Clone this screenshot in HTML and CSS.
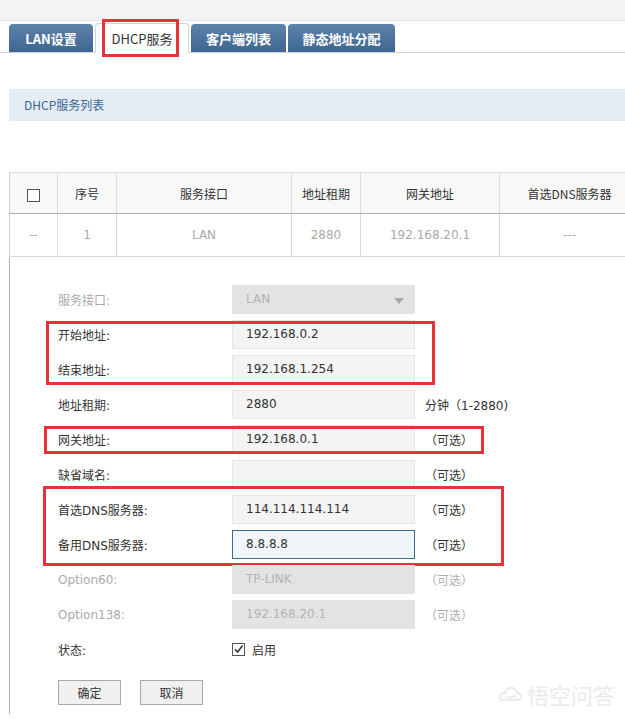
FILE: index.html
```html
<!DOCTYPE html>
<html lang="zh-CN">
<head>
<meta charset="utf-8">
<title>DHCP服务</title>
<link rel="stylesheet" href="styles.css">
</head>
<body>
<div class="page">
  <div class="topstrip"></div>
  <div class="tabs">
    <div class="tab t1">LAN设置</div>
    <div class="tab t2 active"><span>DHCP服务</span><i class="mark"></i></div>
    <div class="tab t3">客户端列表</div>
    <div class="tab t4">静态地址分配</div>
  </div>

  <div class="section-title">DHCP服务列表</div>

  <table class="list">
    <colgroup>
      <col class="c1"><col class="c2"><col class="c3"><col class="c4"><col class="c5"><col class="c6">
    </colgroup>
    <thead>
      <tr>
        <th><span class="cb"></span></th>
        <th>序号</th>
        <th>服务接口</th>
        <th>地址租期</th>
        <th>网关地址</th>
        <th>首选DNS服务器</th>
      </tr>
    </thead>
    <tbody>
      <tr>
        <td>--</td>
        <td>1</td>
        <td>LAN</td>
        <td>2880</td>
        <td>192.168.20.1</td>
        <td>---</td>
      </tr>
    </tbody>
  </table>

  <div class="panel">
    <div class="row disabled">
      <label>服务接口:</label>
      <div class="field select">LAN<span class="arrow"></span></div>
    </div>
    <div class="hl hl-a">
      <div class="row">
        <label>开始地址:</label>
        <div class="field">192.168.0.2</div>
      </div>
      <div class="row">
        <label>结束地址:</label>
        <div class="field">192.168.1.254</div>
      </div>
    </div>
    <div class="row">
      <label>地址租期:</label>
      <div class="field">2880</div>
      <span class="hint hint-unit">分钟（1-2880)</span>
    </div>
    <div class="hl hl-b">
      <div class="row">
        <label>网关地址:</label>
        <div class="field">192.168.0.1</div>
        <span class="hint">（可选）</span>
      </div>
    </div>
    <div class="row">
      <label>缺省域名:</label>
      <div class="field"></div>
      <span class="hint">（可选）</span>
    </div>
    <div class="hl hl-c">
      <div class="row">
        <label>首选DNS服务器:</label>
        <div class="field">114.114.114.114</div>
        <span class="hint">（可选）</span>
      </div>
      <div class="row">
        <label>备用DNS服务器:</label>
        <div class="field focus">8.8.8.8</div>
        <span class="hint">（可选）</span>
      </div>
    </div>
    <div class="row disabled">
      <label>Option60:</label>
      <div class="field">TP-LINK</div>
      <span class="hint">（可选）</span>
    </div>
    <div class="row disabled">
      <label>Option138:</label>
      <div class="field">192.168.20.1</div>
      <span class="hint">（可选）</span>
    </div>
    <div class="row">
      <label>状态:</label>
      <div class="check">
        <span class="cb checked"><svg viewBox="0 0 13 13" width="13" height="13"><path d="M3 6.2 L5.6 9 L10.6 2.4" fill="none" stroke="#333" stroke-width="1.6"/></svg></span>
        <span>启用</span>
      </div>
    </div>
    <div class="buttons">
      <button class="btn">确定</button>
      <button class="btn">取消</button>
    </div>
  </div>

  <div class="watermark">
    <svg viewBox="0 0 26 18" width="26" height="18"><path d="M3 13 Q3 8 8 8 Q9 3 14 3 Q19 3 20 8 Q24 8 24 12 Q24 15 20 15 L7 15 Q3 15 3 13 Z" fill="none" stroke="#ebebeb" stroke-width="2"/><path d="M8 11 Q13 14 19 11" fill="none" stroke="#ebebeb" stroke-width="2"/></svg>
    <span>悟空问答</span>
  </div>
</div>
</body>
</html>
```

FILE: styles.css
```css
html, body {
  margin: 0;
  padding: 0;
  background: #ffffff;
}
body {
  width: 625px;
  height: 719px;
  overflow: hidden;
  font-family: "DejaVu Sans", "Noto Sans CJK SC", sans-serif;
  font-size: 12px;
  color: #333333;
}
.page {
  position: relative;
  height: 719px;
}

/* top strip + tabs */
.topstrip {
  height: 20px;
  background: #f3f3f3;
  border-bottom: 1px solid #e4e4e4;
}
.tabs {
  display: flex;
  gap: 2px;
  margin-top: 3px;
  padding-left: 9px;
  height: 28px;
  border-bottom: 1px solid #cfd4da;
}
.tab {
  position: relative;
  box-sizing: border-box;
  height: 28px;
  padding: 0;
  white-space: nowrap;
  border-radius: 4px 4px 0 0;
  background: linear-gradient(#5e83ab, #3e6690);
  color: #ffffff;
  font-family: "Noto Sans CJK SC", sans-serif;
  font-weight: bold;
  font-size: 13px;
  line-height: 29px;
  text-align: center;
}
.tab.t1 { width: 84px; }
.tab.t2 { width: 94px; }
.tab.t3 { width: 95px; }
.tab.t4 { width: 107px; }
.tab.active {
  background: #ffffff;
  color: #333333;
  font-weight: normal;
  border: 1px solid #cfd4da;
  border-bottom: 1px solid #ffffff;
  height: 30px;
  margin-top: -1px;
  line-height: 29px;
}
.tab .mark {
  position: absolute;
  left: 6px;
  top: -5px;
  width: 71px;
  height: 32px;
  border: 3px solid #e8323a;
}

/* section title */
.section-title {
  margin: 36px 0 0 9px;
  height: 32px;
  line-height: 32px;
  padding-left: 15px;
  background: #e4ecf4;
  color: #3b6590;
  font-family: "Noto Sans CJK SC", sans-serif;
  font-size: 12px;
}

/* list table */
.list {
  margin: 51px 0 0 9px;
  border-collapse: collapse;
  table-layout: fixed;
  width: 630px;
  font-family: "Noto Sans CJK SC", sans-serif;
  font-size: 12px;
}
.list col.c1 { width: 48px; }
.list col.c2 { width: 59px; }
.list col.c3 { width: 175px; }
.list col.c4 { width: 69px; }
.list col.c5 { width: 139px; }
.list col.c6 { width: 140px; }
.list th, .list td {
  border: 1px solid #dcdcdc;
  text-align: center;
  padding: 0;
}
.list th {
  height: 40px;
  background: #f8f8f8;
  font-weight: normal;
  color: #333333;
  border-bottom: 1px solid #a8b0b8;
}
.list td {
  height: 42px;
  color: #aaaaaa;
  font-family: "DejaVu Sans", "Noto Sans CJK SC", sans-serif;
  font-size: 12px;
}
.list th:first-child, .list td:first-child { border-left: 1px solid #d0d0d0; }
.cb {
  display: inline-block;
  width: 11px;
  height: 11px;
  border: 1px solid #555555;
  background: #ffffff;
  vertical-align: middle;
}

/* panel */
.panel {
  margin-left: 9px;
  border-left: 1px solid #a9b2bc;
  padding: 25px 0 9px 48px;
}
.row {
  display: flex;
  align-items: center;
  height: 35px;
}
.row label {
  width: 174px;
  flex: none;
  color: #333333;
}
.field {
  box-sizing: border-box;
  width: 183px;
  height: 29px;
  flex: none;
  line-height: 27px;
  padding-left: 13px;
  background: #f4f4f4;
  border: 1px solid #e6e6e6;
  color: #333333;
  position: relative;
}
.field.focus {
  border-color: #3d6b8e;
  background: #f1f6fa;
}
.hint {
  margin-left: 10px;
  font-family: "Noto Sans CJK SC", sans-serif;
  color: #333333;
}
.hint-unit {
  font-family: "DejaVu Sans", "Noto Sans CJK SC", sans-serif;
  margin-left: 10px;
}
.row.disabled label { color: #aaaaaa; }
.row.disabled .field {
  background: #e3e3e3;
  border-color: #e3e3e3;
  color: #b4b4b4;
}
.row.disabled .hint { color: #b0b0b0; }
.select .arrow {
  position: absolute;
  right: 10px;
  top: 12px;
  width: 0;
  height: 0;
  border-left: 5px solid transparent;
  border-right: 5px solid transparent;
  border-top: 6px solid #a8a8a8;
}
.check {
  display: flex;
  align-items: center;
  gap: 7px;
}
.cb.checked {
  position: relative;
}
.cb.checked svg {
  position: absolute;
  left: -1px;
  top: -1px;
}

/* highlight annotations */
.hl { position: relative; }
.hl::after {
  content: "";
  position: absolute;
  border: 3px solid #e8323a;
  pointer-events: none;
}
.hl-a::after { left: -12px; top: 4px; width: 383px; height: 58px; }
.hl-b::after { left: -14px; top: 4px; width: 434px; height: 22px; }
.hl-c::after { left: -15px; top: -6px; width: 455px; height: 74px; }

/* buttons */
.buttons {
  display: flex;
  gap: 19px;
  margin-top: 13px;
}
.btn {
  box-sizing: border-box;
  width: 63px;
  height: 25px;
  background: #f0f0f0;
  border: 1px solid #a8a8a8;
  border-radius: 0;
  font-family: "Noto Sans CJK SC", sans-serif;
  font-size: 12px;
  color: #333333;
  padding: 0;
}

/* watermark */
.watermark {
  position: absolute;
  right: 10px;
  bottom: 9px;
  display: flex;
  align-items: center;
  gap: 4px;
  color: #ebebeb;
  font-family: "Noto Sans CJK SC", sans-serif;
  font-size: 22px;
}
```
